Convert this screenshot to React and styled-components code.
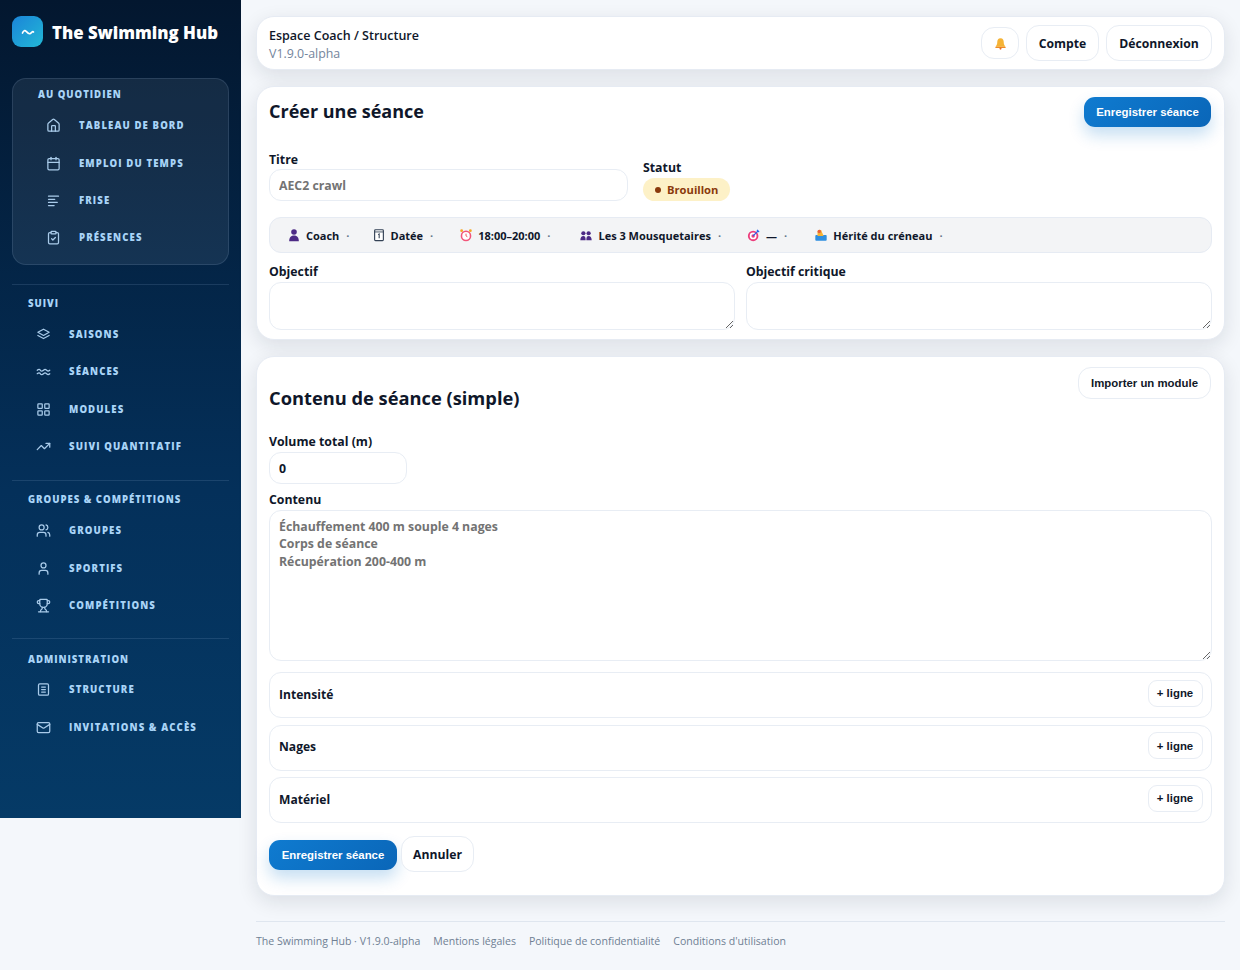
import React from 'react';
import styled, { createGlobalStyle } from 'styled-components';
import { House, Calendar, ClipboardCheck, LayoutGrid, TrendingUp, Users, User, Trophy, Mail } from 'lucide-react';

const Global = createGlobalStyle`
  html, body { margin: 0; padding: 0; background: #f4f7fb; }
  body { font-family: "Open Sans", "Noto Sans", sans-serif; color: #0f172a; }
  * { box-sizing: border-box; }
`;

const Layout = styled.div`
  display: flex;
  align-items: flex-start;
  width: 1240px;
  height: 970px;
  overflow: hidden;
`;

const Sidebar = styled.aside`
  width: 241px;
  height: 818px;
  flex: none;
  padding: 16px 12px 0;
  background: linear-gradient(180deg, #03172f 0%, #04305a 60%, #053a66 100%);
`;

const Brand = styled.div`
  display: flex;
  align-items: center;
  gap: 9px;
  height: 31px;
  margin-bottom: 31px;
`;

const BrandLogo = styled.div`
  width: 31px;
  height: 31px;
  border-radius: 9px;
  display: flex;
  align-items: center;
  justify-content: center;
  background: linear-gradient(135deg, #1b84d8, #22b8d6);
`;

const BrandName = styled.div`
  font-size: 16.8px;
  font-weight: 800;
  color: #fff;
  white-space: nowrap;
  padding-top: 1px;
`;

const Panel = styled.section`
  padding: 9px 0 7px 25px;
  border: 1px solid rgba(148, 180, 220, 0.16);
  border-radius: 14px;
  background: rgba(255, 255, 255, 0.07);
  margin-bottom: 19px;
`;

const Section = styled.section`
  border-top: 1px solid rgba(148, 180, 220, 0.16);
  padding: ${(p) => p.$top || 12}px 0 ${(p) => p.$bottom || 15}px 16px;
`;

const SectionLabel = styled.div`
  height: 14px;
  line-height: 14px;
  margin-bottom: ${(p) => p.$mb ?? 5}px;
  font-size: 9.6px;
  font-weight: 800;
  letter-spacing: 0.98px;
  color: #a9d4f7;
  text-transform: uppercase;
  white-space: nowrap;
`;

const NavItem = styled.div`
  display: flex;
  align-items: center;
  height: 37.4px;
  padding-left: 8px;
  font-size: 9.6px;
  font-weight: 800;
  letter-spacing: 1.1px;
  color: #a9d4f7;
  text-transform: uppercase;
  white-space: nowrap;
  svg { flex: none; width: 15px; height: 15px; margin-right: 18px; color: #a9cbea; }
`;

const Main = styled.main`
  flex: 1;
  min-width: 0;
  padding: 16px 15px 0;
`;

const Card = styled.div`
  background: #fff;
  border: 1px solid #e6ebf3;
  border-radius: 18px;
  box-shadow: 0 6px 20px rgba(15, 23, 42, 0.11);
  padding: ${(p) => p.$padding || '10px 12px'};
  margin-bottom: 16px;
`;

const TopBar = styled(Card)`
  display: flex;
  align-items: center;
  justify-content: space-between;
  height: 54px;
  padding: 0 12px;
`;

const CrumbBlock = styled.div`
  padding-top: 4px;
`;

const Crumb = styled.div`
  font-size: 12.5px;
  font-weight: 600;
  line-height: 18px;
`;

const Version = styled.div`
  font-size: 12.4px;
  line-height: 18px;
  color: #74859c;
`;

const Actions = styled.div`
  display: flex;
  align-items: center;
  gap: 7px;
`;

const GhostButton = styled.button`
  height: ${(p) => p.$h || 36}px;
  width: ${(p) => p.$w}px;
  padding: 0;
  display: inline-flex;
  align-items: center;
  justify-content: center;
  background: #fff;
  border: 1.5px solid #e8edf4;
  border-radius: 13px;
  font-family: inherit;
  font-size: 12.2px;
  font-weight: 700;
  color: #0f172a;
`;

const ImportButton = styled(GhostButton)`
  font-family: "Liberation Sans", sans-serif;
  font-size: 11.4px;
  color: #111827;
`;

const PrimaryButton = styled.button`
  width: ${(p) => p.$w}px;
  height: 30px;
  padding: 0;
  border: none;
  border-radius: 11px;
  background: linear-gradient(135deg, #0f7bd0, #0a66b8);
  color: #fff;
  font-family: "Liberation Sans", sans-serif;
  font-size: 11.4px;
  font-weight: 700;
  box-shadow: 0 8px 16px rgba(14, 116, 200, 0.24);
`;

const SubmitButton = styled(PrimaryButton)`
  margin-top: 2px;
`;

const CardHead = styled.div`
  display: flex;
  align-items: flex-start;
  justify-content: space-between;
  height: ${(p) => p.$h}px;
  padding-right: 1px;
`;

const CardTitle = styled.h2`
  margin: ${(p) => p.$top || 0}px 0 0;
  font-size: ${(p) => p.$size || 18}px;
  line-height: 28px;
  font-weight: 700;
  color: #0f172a;
`;

const Label = styled.div`
  font-size: 12.3px;
  font-weight: 700;
  line-height: 16px;
  margin-bottom: ${(p) => p.$mb ?? 2}px;
  color: #0f172a;
`;

const FormRow = styled.div`
  display: flex;
  align-items: flex-end;
  gap: 15px;
`;

const Field = styled.div`
  width: ${(p) => p.$w || 'auto'};
  flex: none;
`;

const TextInput = styled.input`
  display: block;
  width: ${(p) => p.$w || '100%'};
  height: 32px;
  padding: 0 9px;
  border: 1.5px solid #e8edf4;
  border-radius: 12px;
  background: #fff;
  font-family: inherit;
  font-size: 12.3px;
  font-weight: 700;
  color: ${(p) => p.$color || '#737373'};
  outline: none;
`;

const Area = styled.textarea`
  display: block;
  width: 100%;
  height: ${(p) => p.$h}px;
  padding: 7px 9px;
  border: 1.5px solid #e8edf4;
  border-radius: 12px;
  background: #fff;
  font-family: inherit;
  font-size: 12.3px;
  font-weight: 700;
  line-height: 17.3px;
  color: #737373;
  outline: none;
`;

const Badge = styled.div`
  display: flex;
  width: fit-content;
  align-items: center;
  gap: 6px;
  height: 23px;
  padding: 0 12px;
  border-radius: 12px;
  background: #fdf1c7;
  color: #8a3a0c;
  font-size: 11.2px;
  font-weight: 700;
  &::before { content: ''; width: 6px; height: 6px; border-radius: 50%; background: #8a3a0c; }
`;

const ChipBar = styled.div`
  display: flex;
  align-items: center;
  height: 36px;
  margin: 16px 0 11px;
  padding-left: 17px;
  border: 1px solid #e6ebf3;
  border-radius: 12px;
  background: #f3f4f6;
`;

const Chip = styled.span`
  display: inline-flex;
  align-items: center;
  gap: 5px;
  margin-right: ${(p) => p.$gap}px;
  font-size: 11px;
  font-weight: 700;
  color: #0f172a;
  white-space: nowrap;
  svg { flex: none; width: 14px; height: 14px; }
  &::after { content: '·'; margin-left: 2px; color: #64748b; font-weight: 700; }
`;

const TwoCols = styled.div`
  display: grid;
  grid-template-columns: 1fr 1fr;
  gap: 11px;
`;

const StackField = styled.div`
  margin-top: ${(p) => p.$top || 0}px;
`;

const Block = styled.div`
  display: flex;
  align-items: center;
  justify-content: space-between;
  height: 46px;
  margin-top: ${(p) => p.$top || 6.5}px;
  padding: 0 8.5px 2px 9px;
  border: 1.5px solid #e8edf4;
  border-radius: 12px;
  font-size: 12.1px;
  font-weight: 700;
`;

const AddButton = styled(GhostButton)`
  font-family: "Liberation Sans", sans-serif;
  font-size: 11.4px;
  border-radius: 9px;
  margin-bottom: 2px;
`;

const FormActions = styled.div`
  display: flex;
  align-items: center;
  gap: 4px;
  margin-top: 13px;
`;

const Footer = styled.footer`
  display: flex;
  gap: 13px;
  margin-top: 25px;
  padding-top: 12px;
  border-top: 1px solid #dfe6ef;
  font-size: 10.55px;
  line-height: 15px;
  color: #6f7f93;
`;

const LayersIcon = () => (
  <svg viewBox="0 0 24 24" fill="none" stroke="currentColor" strokeWidth="2" strokeLinejoin="round" strokeLinecap="round">
    <path d="M12 3.500l9 5-9 5-9-5z" />
    <path d="M3 13.500l9 5 9-5" />
  </svg>
);

const WavesIcon = () => (
  <svg viewBox="0 0 24 24" fill="none" stroke="currentColor" strokeWidth="2" strokeLinecap="round">
    <path d="M2 10c2-2 4-2 5 0s3 2 5 0 3-2 5 0 3 2 5 0" />
    <path d="M2 15.500c2-2 4-2 5 0s3 2 5 0 3-2 5 0 3 2 5 0" />
  </svg>
);

const FriseIcon = () => (
  <svg viewBox="0 0 24 24" fill="none" stroke="currentColor" strokeWidth="2" strokeLinecap="round">
    <path d="M4 5h16M4 10h10M4 15h14M4 20h9" />
  </svg>
);

const StructureIcon = () => (
  <svg viewBox="0 0 24 24" fill="none" stroke="currentColor" strokeWidth="2" strokeLinecap="round">
    <rect x="4" y="3" width="16" height="18" rx="2" />
    <path d="M9 8h6M9 12h6M9 16h6" />
  </svg>
);

const PersonEmoji = () => (
  <svg viewBox="0 0 16 16"><circle cx="8" cy="4.500" r="3.200" fill="#4c2a85" /><path d="M2.500 15c0-5 2.500-6.500 5.500-6.500s5.500 1.500 5.500 6.500z" fill="#4c2a85" /></svg>
);

const CalendarEmoji = () => (
  <svg viewBox="0 0 16 16"><rect x="3" y="2" width="10" height="12.500" rx="1" fill="#fff" stroke="#334155" strokeWidth="1.300" /><path d="M3 4.500h10" stroke="#334155" /><path d="M7 7.500l1.200-.8v5" stroke="#334155" strokeWidth="1.200" fill="none" /></svg>
);

const ClockEmoji = () => (
  <svg viewBox="0 0 16 16"><circle cx="8" cy="9" r="5.200" fill="#fff" stroke="#f2557a" strokeWidth="1.800" /><path d="M8 6.500V9l1.600 1" stroke="#ef4444" strokeWidth="1" fill="none" /><circle cx="3" cy="3" r="1.600" fill="#f5a524" /><circle cx="13" cy="3" r="1.600" fill="#f5a524" /></svg>
);

const GroupEmoji = () => (
  <svg viewBox="0 0 16 16"><g fill="#4c2a85"><circle cx="5" cy="6" r="2.400" /><circle cx="11" cy="6" r="2.400" /><path d="M1.500 14c0-3.500 1.500-5 3.500-5s2.600 1.500 2.600 5zM8.400 14c0-3.500.6-5 2.600-5s3.500 1.500 3.500 5z" /></g></svg>
);

const TargetEmoji = () => (
  <svg viewBox="0 0 16 16"><circle cx="7" cy="9" r="6" fill="#ec3d7c" /><circle cx="7" cy="9" r="3.900" fill="#fff" /><circle cx="7" cy="9" r="2" fill="#ec3d7c" /><path d="M7 9l6-6" stroke="#2563eb" strokeWidth="1.400" /><path d="M11.500 1.500l3 3-2 .4-1.400-1.400z" fill="#2563eb" /></svg>
);

const PlaceEmoji = () => (
  <svg viewBox="0 0 16 16"><rect x="1.500" y="8" width="13" height="6.500" rx="1" fill="#2f8fe0" /><path d="M4 9V4.500a2.500 2.500 0 0 1 5 0L11 9z" fill="#f5b335" /><circle cx="6" cy="4" r="2" fill="#e8613c" /></svg>
);

const BellEmoji = () => (
  <svg viewBox="0 0 16 16" width="13" height="13"><path d="M8 1.500c-3 0-4 2.300-4 5 0 2.500-1 4-2 5.500h12c-1-1.500-2-3-2-5.500 0-2.700-1-5-4-5z" fill="#f5b335" /><path d="M2 12h12l.5 1.500H1.500z" fill="#ef8a24" /><circle cx="8" cy="14.300" r="1.300" fill="#e8702a" /></svg>
);

const daily = [
  ['Tableau de bord', <House key="i" />],
  ['Emploi du temps', <Calendar key="i" />],
  ['Frise', <FriseIcon key="i" />],
  ['Présences', <ClipboardCheck key="i" />],
];

const sections = [
  { title: 'Suivi', bottom: 15, items: [['Saisons', <LayersIcon key="i" />], ['Séances', <WavesIcon key="i" />], ['Modules', <LayoutGrid key="i" />], ['Suivi quantitatif', <TrendingUp key="i" />]] },
  { title: 'Groupes & compétitions', bottom: 14, items: [['Groupes', <Users key="i" />], ['Sportifs', <User key="i" />], ['Compétitions', <Trophy key="i" />]] },
  { title: 'Administration', top: 14, mb: 4, bottom: 0, items: [['Structure', <StructureIcon key="i" />], ['Invitations & accès', <Mail key="i" />]] },
];

const chips = [
  ['Coach', <PersonEmoji key="i" />, 22],
  ['Datée', <CalendarEmoji key="i" />, 26],
  ['18:00–20:00', <ClockEmoji key="i" />, 29],
  ['Les 3 Mousquetaires', <GroupEmoji key="i" />, 26],
  ['—', <TargetEmoji key="i" />, 27],
  ['Hérité du créneau', <PlaceEmoji key="i" />, 0],
];

export default function App() {
  return (
    <Layout>
      <Global />
      <Sidebar>
        <Brand>
          <BrandLogo>
            <svg width="16" height="16" viewBox="0 0 16 16" fill="none" stroke="#fff" strokeWidth="1.700" strokeLinecap="round">
              <path d="M2.500 9c1-2.500 2.500-3 3.800-1.500S8.800 10.500 10.300 9.500 12.500 7 13.500 8" />
            </svg>
          </BrandLogo>
          <BrandName>The Swimming Hub</BrandName>
        </Brand>
        <Panel>
          <SectionLabel>Au quotidien</SectionLabel>
          {daily.map(([label, icon]) => <NavItem key={label}>{icon}{label}</NavItem>)}
        </Panel>
        {sections.map((s) => (
          <Section key={s.title} $top={s.top} $bottom={s.bottom}>
            <SectionLabel $mb={s.mb}>{s.title}</SectionLabel>
            {s.items.map(([label, icon]) => <NavItem key={label}>{icon}{label}</NavItem>)}
          </Section>
        ))}
      </Sidebar>
      <Main>
        <TopBar>
          <CrumbBlock>
            <Crumb>Espace Coach / Structure</Crumb>
            <Version>V1.9.0-alpha</Version>
          </CrumbBlock>
          <Actions>
            <GhostButton $w={38} $h={32}><BellEmoji /></GhostButton>
            <GhostButton $w={73}>Compte</GhostButton>
            <GhostButton $w={106}>Déconnexion</GhostButton>
          </Actions>
        </TopBar>

        <Card $padding="10px 12px 9px">
          <CardHead $h={55}>
            <CardTitle>Créer une séance</CardTitle>
            <PrimaryButton $w={127}>Enregistrer séance</PrimaryButton>
          </CardHead>
          <FormRow>
            <Field $w="359px">
              <Label $mb={1}>Titre</Label>
              <TextInput defaultValue="AEC2 crawl" />
            </Field>
            <Field>
              <Label>Statut</Label>
              <Badge>Brouillon</Badge>
            </Field>
          </FormRow>
          <ChipBar>
            {chips.map(([label, icon, gap]) => <Chip key={label} $gap={gap}>{icon}{label}</Chip>)}
          </ChipBar>
          <TwoCols>
            <div>
              <Label>Objectif</Label>
              <Area $h={48} />
            </div>
            <div>
              <Label>Objectif critique</Label>
              <Area $h={48} />
            </div>
          </TwoCols>
        </Card>

        <Card $padding="10px 12px 23px">
          <CardHead $h={67}>
            <CardTitle $top={17} $size={18.3}>Contenu de séance (simple)</CardTitle>
            <ImportButton $w={133} $h={32}>Importer un module</ImportButton>
          </CardHead>
          <StackField>
            <Label>Volume total (m)</Label>
            <TextInput $w="138px" $color="#0f172a" defaultValue="0" />
          </StackField>
          <StackField $top={8}>
            <Label>Contenu</Label>
            <Area $h={151} defaultValue={'Échauffement 400 m souple 4 nages\nCorps de séance\nRécupération 200-400 m'} />
          </StackField>
          <Block $top={11}>Intensité<AddButton $w={55} $h={27}>+ ligne</AddButton></Block>
          <Block>Nages<AddButton $w={55} $h={27}>+ ligne</AddButton></Block>
          <Block>Matériel<AddButton $w={55} $h={27}>+ ligne</AddButton></Block>
          <FormActions>
            <SubmitButton $w={128}>Enregistrer séance</SubmitButton>
            <GhostButton $w={73}>Annuler</GhostButton>
          </FormActions>
        </Card>

        <Footer>
          <span>The Swimming Hub · V1.9.0-alpha</span>
          <span>Mentions légales</span>
          <span>Politique de confidentialité</span>
          <span>Conditions d'utilisation</span>
        </Footer>
      </Main>
    </Layout>
  );
}
